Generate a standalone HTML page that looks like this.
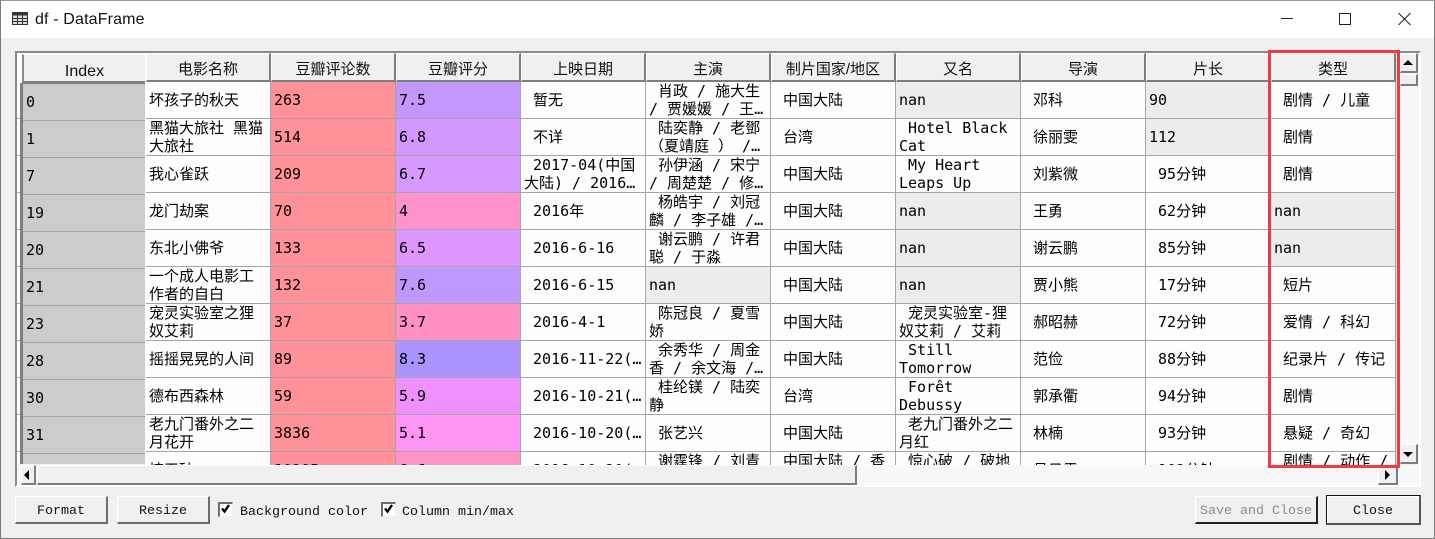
<!DOCTYPE html>
<html lang="zh"><head><meta charset="utf-8"><title>df - DataFrame</title>
<style>
html,body{margin:0;padding:0}
body{width:1435px;height:539px;overflow:hidden;position:relative;background:#f0f0f0;font-family:"DejaVu Sans Mono","Noto Sans CJK SC",monospace;color:#000}
div{box-sizing:border-box}
.a{position:absolute}
#win{position:absolute;left:0;top:0;width:1435px;height:539px;border:1px solid #7a7a7a;border-top:1px solid #9a9a9a;pointer-events:none;z-index:9}
#title{position:absolute;left:0;top:0;width:1435px;height:38px;background:#fff}
#tt{position:absolute;left:35px;top:9px;font:16px/21px "Liberation Sans","Noto Sans CJK SC",sans-serif;letter-spacing:.15px;color:#111}
#frame{position:absolute;left:15px;top:51px;width:1406px;height:436px;border-top:2px solid #8a8a8a;border-left:2px solid #8a8a8a;border-right:2px solid #fff;border-bottom:2px solid #fff;background:#fff}
.h{position:absolute;top:53px;height:29px;width:125px;padding-top:3px;background:#f0f0f0;border-top:1px solid #fff;border-left:1px solid #fff;border-right:2px solid #7d7d7d;border-bottom:2px solid #7d7d7d;text-align:center;font:15px/26px "Liberation Sans","Noto Sans CJK SC",sans-serif;color:#111}
#grid{position:absolute;left:146px;top:82px;width:1250px;height:383px;overflow:hidden;display:grid;grid-template-columns:repeat(10,125px);grid-auto-rows:37px;background:#fdfdfd;font-size:15px;line-height:18px}
#grid>div{border-right:1px solid #a5a5a5;border-bottom:1px solid #a5a5a5;padding:0 0 0 3px;display:flex;align-items:center;white-space:pre;overflow:hidden}
.r{background:#ff9198}
.n{background:#ececec}
#idx{position:absolute;left:23px;top:83px;width:122px;height:381px;overflow:hidden;background:#ccc;font-size:15px}
#idx div{height:37px;border-bottom:1px solid #a5a5a5;padding:7px 0 0 3px;line-height:22px}
#idx div:first-child{height:38px;padding-top:8px}
.btn{position:absolute;padding-top:5px;background:#f0f0f0;border-top:1px solid #fff;border-left:1px solid #fff;border-right:2px solid #6e6e6e;border-bottom:2px solid #6e6e6e;text-align:center;font:13.33px/20px "Liberation Mono",monospace;color:#111}
.cb{position:absolute;top:502px;width:15px;height:15px;background:#fff;border-top:2px solid #6e6e6e;border-left:2px solid #6e6e6e;border-right:1px solid #eee;border-bottom:1px solid #eee}
.lb{position:absolute;top:505px;font:13.33px/16px "Liberation Mono",monospace;color:#111;white-space:pre}
.sb{position:absolute;background:#f0f0f0;border-top:1px solid #fff;border-left:1px solid #fff;border-right:2px solid #7d7d7d;border-bottom:2px solid #7d7d7d}
.dith{position:absolute;background:repeating-conic-gradient(#f0f0f0 0 25%,#fff 0 50%) 0 0/2px 2px}
.t{position:absolute;width:0;height:0}
</style></head><body>
<div id="title">
<svg class="a" style="left:12px;top:12px" width="16" height="13" viewBox="0 0 16 13"><rect x=".5" y=".5" width="15" height="12" fill="#ddd" stroke="#333"/><rect x="0" y="0" width="16" height="3.500" fill="#333"/><path d="M0 6.500h16M0 9.500h16M5.500 0v13M10.500 0v13" stroke="#333" fill="none"/></svg>
<div id="tt">df - DataFrame</div>
<svg class="a" style="left:1275px;top:8px" width="145" height="22" viewBox="0 0 145 22"><path d="M6 10.500h12" stroke="#222" fill="none"/><rect x="64.500" y="5.500" width="11" height="11" stroke="#222" fill="none"/><path d="M123.500 5l12 12M135.500 5l-12 12" stroke="#222" fill="none"/></svg>
</div>

<div id="frame"></div>
<div class="a" style="left:20px;top:83px;width:3px;height:381px;background:#808080"></div>
<div class="a" style="left:17px;top:118px;width:3px;height:1px;background:#aaa"></div>
<div class="a" style="left:17px;top:155px;width:3px;height:1px;background:#aaa"></div>
<div class="a" style="left:17px;top:192px;width:3px;height:1px;background:#aaa"></div>
<div class="a" style="left:17px;top:229px;width:3px;height:1px;background:#aaa"></div>
<div class="a" style="left:17px;top:266px;width:3px;height:1px;background:#aaa"></div>
<div class="a" style="left:17px;top:303px;width:3px;height:1px;background:#aaa"></div>
<div class="a" style="left:17px;top:340px;width:3px;height:1px;background:#aaa"></div>
<div class="a" style="left:17px;top:377px;width:3px;height:1px;background:#aaa"></div>
<div class="a" style="left:17px;top:414px;width:3px;height:1px;background:#aaa"></div>
<div class="a" style="left:17px;top:451px;width:3px;height:1px;background:#aaa"></div>

<div class="h" style="left:22px;top:54px;width:123px;height:29px;padding-top:4px;font-size:16px;border-right:0;border-left:2px solid #8a8a8a;border-bottom:2px solid #808080">Index</div>
<div class="h" style="left:146px">电影名称</div>
<div class="h" style="left:271px">豆瓣评论数</div>
<div class="h" style="left:396px">豆瓣评分</div>
<div class="h" style="left:521px">上映日期</div>
<div class="h" style="left:646px">主演</div>
<div class="h" style="left:771px">制片国家/地区</div>
<div class="h" style="left:896px">又名</div>
<div class="h" style="left:1021px">导演</div>
<div class="h" style="left:1146px">片长</div>
<div class="h" style="left:1271px">类型</div>

<div id="idx"><div>0</div><div>1</div><div>7</div><div>19</div><div>20</div><div>21</div><div>23</div><div>28</div><div>30</div><div>31</div></div>
<div class="a" style="left:23px;top:83px;width:122px;height:1px;background:#808080"></div>

<div id="grid">
<div>坏孩子的秋天</div><div class="r">263</div><div style="background:#c497ff">7.5</div><div> 暂无</div><div> 肖政 / 施大生
/ 贾媛媛 / 王…</div><div> 中国大陆</div><div class="n">nan</div><div> 邓科</div><div class="n">90</div><div> 剧情 / 儿童</div>
<div>黑猫大旅社 黑猫
大旅社</div><div class="r">514</div><div style="background:#d398ff">6.8</div><div> 不详</div><div> 陆奕静 / 老鄧
（夏靖庭 ） /…</div><div> 台湾</div><div> Hotel Black
Cat</div><div> 徐丽雯</div><div class="n">112</div><div> 剧情</div>
<div>我心雀跃</div><div class="r">209</div><div style="background:#d69aff">6.7</div><div> 2017-04(中国
大陆) / 2016…</div><div> 孙伊涵 / 宋宁
/ 周楚楚 / 修…</div><div> 中国大陆</div><div> My Heart
Leaps Up</div><div> 刘紫微</div><div> 95分钟</div><div> 剧情</div>
<div>龙门劫案</div><div class="r">70</div><div style="background:#ff92cc">4</div><div> 2016年</div><div> 杨皓宇 / 刘冠
麟 / 李子雄 /…</div><div> 中国大陆</div><div class="n">nan</div><div> 王勇</div><div> 62分钟</div><div class="n">nan</div>
<div>东北小佛爷</div><div class="r">133</div><div style="background:#de97ff">6.5</div><div> 2016-6-16</div><div> 谢云鹏 / 许君
聪 / 于淼</div><div> 中国大陆</div><div class="n">nan</div><div> 谢云鹏</div><div> 85分钟</div><div class="n">nan</div>
<div>一个成人电影工
作者的自白</div><div class="r">132</div><div style="background:#c097ff">7.6</div><div> 2016-6-15</div><div class="n">nan</div><div> 中国大陆</div><div class="n">nan</div><div> 贾小熊</div><div> 17分钟</div><div> 短片</div>
<div>宠灵实验室之狸
奴艾莉</div><div class="r">37</div><div style="background:#ff90c3">3.7</div><div> 2016-4-1</div><div> 陈冠良 / 夏雪
娇</div><div> 中国大陆</div><div> 宠灵实验室-狸
奴艾莉 / 艾莉</div><div> 郝昭赫</div><div> 72分钟</div><div> 爱情 / 科幻</div>
<div>摇摇晃晃的人间</div><div class="r">89</div><div style="background:#ab94ff">8.3</div><div> 2016-11-22(…</div><div> 余秀华 / 周金
香 / 余文海 /…</div><div> 中国大陆</div><div> Still
Tomorrow</div><div> 范俭</div><div> 88分钟</div><div> 纪录片 / 传记</div>
<div>德布西森林</div><div class="r">59</div><div style="background:#f090ff">5.9</div><div> 2016-10-21(…</div><div> 桂纶镁 / 陆奕
静</div><div> 台湾</div><div> Forêt
Debussy</div><div> 郭承衢</div><div> 94分钟</div><div> 剧情</div>
<div>老九门番外之二
月花开</div><div class="r">3836</div><div style="background:#ff94f5">5.1</div><div> 2016-10-20(…</div><div> 张艺兴</div><div> 中国大陆</div><div> 老九门番外之二
月红</div><div> 林楠</div><div> 93分钟</div><div> 悬疑 / 奇幻</div>
<div>惊天破</div><div class="r">10105</div><div style="background:#ff94c8">6.6</div><div> 2016-10-20(…</div><div> 谢霆锋 / 刘青
云 / 吴京 /…</div><div> 中国大陆 / 香
港</div><div> 惊心破 / 破地
狱</div><div> 吕日霈</div><div> 102分钟</div><div> 剧情 / 动作 /
犯罪</div>
</div>

<div class="a" style="left:1396px;top:53px;width:23px;height:431px;background:#f0f0f0"></div>
<div class="dith" style="left:1400px;top:86px;width:19px;height:358px"></div>
<div class="sb" style="left:1400px;top:53px;width:18px;height:20px"></div>
<div class="t" style="left:1403px;top:60px;border-left:5px solid transparent;border-right:5px solid transparent;border-bottom:5px solid #000"></div>
<div class="sb" style="left:1400px;top:74px;width:18px;height:12px"></div>
<div class="sb" style="left:1400px;top:444px;width:18px;height:20px"></div>
<div class="t" style="left:1403px;top:452px;border-left:5px solid transparent;border-right:5px solid transparent;border-top:5px solid #000"></div>

<div class="dith" style="left:17px;top:465px;width:1402px;height:20px"></div>
<div class="a" style="left:17px;top:464px;width:129px;height:1px;background:#f0f0f0"></div>
<div class="sb" style="left:21px;top:465px;width:15px;height:20px"></div>
<div class="t" style="left:24px;top:470px;border-top:5px solid transparent;border-bottom:5px solid transparent;border-right:5px solid #000"></div>
<div class="sb" style="left:37px;top:465px;width:820px;height:20px"></div>
<div class="sb" style="left:1378px;top:465px;width:20px;height:20px"></div>
<div class="t" style="left:1385px;top:470px;border-top:5px solid transparent;border-bottom:5px solid transparent;border-left:5px solid #000"></div>

<div class="a" style="left:1268px;top:50px;width:132px;height:418px;border:3px solid #f43a3e;z-index:5"></div>

<div class="btn" style="left:15px;top:496px;width:93px;height:28px">Format</div>
<div class="btn" style="left:117px;top:496px;width:93px;height:28px">Resize</div>
<div class="cb" style="left:218px"><svg width="12" height="12" style="display:block" viewBox="0 0 12 12"><path d="M2 4.500l2.500 3L9 1" stroke="#000" stroke-width="2.400" fill="none"/></svg></div>
<div class="lb" style="left:240px">Background color</div>
<div class="cb" style="left:381px"><svg width="12" height="12" style="display:block" viewBox="0 0 12 12"><path d="M2 4.500l2.500 3L9 1" stroke="#000" stroke-width="2.400" fill="none"/></svg></div>
<div class="lb" style="left:402px">Column min/max</div>
<div class="btn" style="left:1195px;top:496px;width:123px;height:28px;color:#8a8a8a;border-right-color:#222;border-bottom-color:#222">Save and Close</div>
<div class="btn" style="left:1326px;top:495px;width:95px;height:30px;padding-top:6px;border:1px solid #111;border-right:2px solid #555;border-bottom:2px solid #555;box-shadow:inset 1px 1px 0 #fff">Close</div>
<div id="win"></div>
</body></html>
